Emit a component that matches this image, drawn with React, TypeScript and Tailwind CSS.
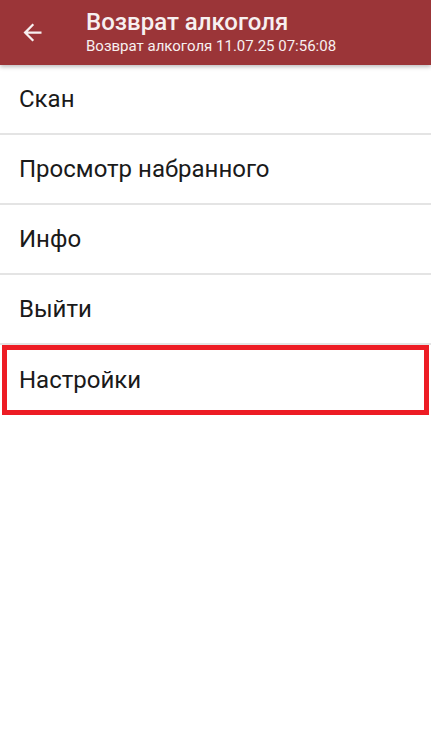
const items = ['Скан', 'Просмотр набранного', 'Инфо', 'Выйти', 'Настройки'];

function BackArrow() {
  return (
    <svg viewBox="0 0 24 24" className="w-[27px] h-[27px]" fill="currentColor">
      <path d="M20 11H7.83l5.59-5.59L12 4l-8 8 8 8 1.41-1.41L7.83 13H20v-2z" />
    </svg>
  );
}

export default function App() {
  return (
    <div className="w-[431px] h-[738px] bg-white flex flex-col font-['Roboto',sans-serif]">
      <header className="h-[65px] bg-[#9b3538] text-[#f7f0f0] flex items-center shadow-[0_2px_4px_rgba(0,0,0,0.25)] relative z-10">
        <div className="w-[86px] flex items-center pl-[19px]">
          <BackArrow />
        </div>
        <div className="flex flex-col">
          <h1 className="text-[24px] leading-[27px] font-medium">Возврат алкоголя</h1>
          <p className="text-[15px] leading-[20px]">Возврат алкоголя 11.07.25 07:56:08</p>
        </div>
      </header>

      <ul className="flex flex-col">
        {items.map((item) => (
          <li
            key={item}
            className={
              item === 'Настройки'
                ? 'h-[70px] mx-[2px] border-[5px] border-[#ed1c24] flex items-center pl-[12px] text-[24px] text-[#1a1a1a]'
                : 'h-[70px] border-b-2 border-[#e4e4e4] flex items-center pl-[19px] text-[24px] text-[#1a1a1a]'
            }
          >
            {item}
          </li>
        ))}
      </ul>
    </div>
  );
}
